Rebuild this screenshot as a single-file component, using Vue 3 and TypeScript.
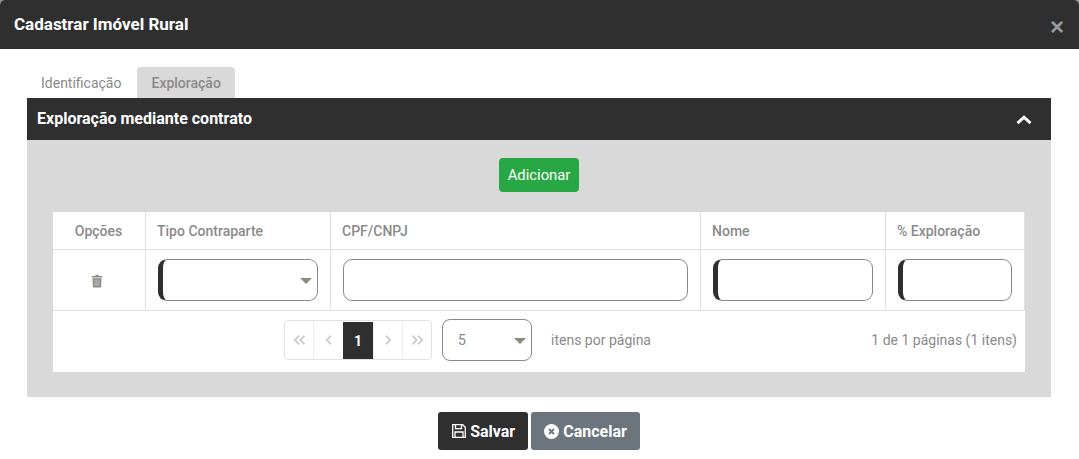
<script setup lang="ts">
const columns: string[] = ['Opções', 'Tipo Contraparte', 'CPF/CNPJ', 'Nome', '% Exploração']
</script>

<template>
  <div class="screen">
    <div class="modal">
      <header class="modal-head">
        <h1>Cadastrar Imóvel Rural</h1>
        <button class="close" aria-label="Fechar">×</button>
      </header>
      <div class="modal-body">
        <nav class="tabs">
          <span class="tab">Identificação</span>
          <span class="tab active">Exploração</span>
        </nav>
        <section class="panel">
          <div class="panel-head">
            <span>Exploração mediante contrato</span>
            <svg class="chev" width="16" height="10" viewBox="0 0 16 10">
              <path d="M1.500 8.200 8 2.200l6.500 6" fill="none" stroke="#fff" stroke-width="3" />
            </svg>
          </div>
          <div class="panel-body">
            <button class="add">Adicionar</button>
            <div class="grid">
              <div class="row head">
                <div v-for="c in columns" :key="c" class="cell" :class="{ center: c === 'Opções' }">{{ c }}</div>
              </div>
              <div class="row data">
                <div class="cell center">
                  <svg class="trash" width="12" height="14" viewBox="0 0 12 14">
                    <path fill="#8b8b8b" d="M.8 2h3.400l.5-1.200h2.600l.5 1.200h3.400v1.600H.8zM1.500 4.200h9l-.4 8.300c0 .6-.4 1-1 1H2.900c-.6 0-1-.4-1-1z" />
                    <path fill="#d2b89c" d="M3.600 5.500h1v6.500h-1z" />
                    <path fill="#c3c3c3" d="M5.500 5.500h1v6.500h-1z" />
                    <path fill="#a8bcd2" d="M7.400 5.500h1v6.500h-1z" />
                  </svg>
                </div>
                <div class="cell">
                  <div class="field req select"><i class="caret"></i></div>
                </div>
                <div class="cell"><div class="field"></div></div>
                <div class="cell"><div class="field req"></div></div>
                <div class="cell"><div class="field req"></div></div>
              </div>
              <div class="pager">
                <div class="pages">
                  <span class="pg">
                    <svg width="13" height="10" viewBox="0 0 13 10"><path d="M6 .8 1.800 5 6 9.200M11.500 .8 7.300 5l4.200 4.200" /></svg>
                  </span>
                  <span class="pg">
                    <svg width="8" height="10" viewBox="0 0 8 10"><path d="M6 .8 1.800 5 6 9.200" /></svg>
                  </span>
                  <span class="pg cur">1</span>
                  <span class="pg">
                    <svg width="8" height="10" viewBox="0 0 8 10"><path d="M2 .8 6.200 5 2 9.200" /></svg>
                  </span>
                  <span class="pg">
                    <svg width="13" height="10" viewBox="0 0 13 10"><path d="M1.500 .8 5.700 5 1.500 9.200M7 .8 11.200 5 7 9.200" /></svg>
                  </span>
                </div>
                <div class="size">5<i class="caret"></i></div>
                <span class="per">itens por página</span>
                <span class="info">1 de 1 páginas (1 itens)</span>
              </div>
            </div>
          </div>
        </section>
        <footer class="actions">
          <button class="btn dark">
            <svg width="16" height="16" viewBox="0 0 16 16" fill="none" stroke="#fff" stroke-width="1.300">
              <path d="M1.700 1.700h10l2.600 2.600v10H1.700z" />
              <path d="M4.500 1.700v4h6v-4M4 14.300V9h8v5.300" />
            </svg>
            Salvar
          </button>
          <button class="btn grey">
            <svg width="15" height="15" viewBox="0 0 15 15">
              <circle cx="7.500" cy="7.500" r="7.500" fill="#fff" />
              <path d="M5 5l5 5M10 5l-5 5" stroke="#6c757d" stroke-width="1.800" />
            </svg>
            Cancelar
          </button>
        </footer>
      </div>
    </div>
  </div>
</template>

<style scoped>
.screen {
  width: 1079px;
  height: 459px;
  overflow: hidden;
  background: #8c8c8c;
}
.modal {
  height: 459px;
  overflow: hidden;
  background: #fff;
  border-radius: 5px 5px 0 0;
  font-family: Roboto, "Liberation Sans", sans-serif;
  font-size: 14px;
  color: #8a8a8a;
}
.modal-head {
  height: 49px;
  box-sizing: border-box;
  background: #2f2f2f;
  display: flex;
  align-items: center;
  justify-content: space-between;
  padding: 0 14px;
}
.modal-head h1 {
  margin: 0 0 1px;
  font-size: 17px;
  font-weight: 700;
  color: #fff;
}
.close {
  background: none;
  border: 0;
  padding: 0;
  margin: 4px 1px 0 0;
  font: 700 24px/1 "Liberation Sans", sans-serif;
  color: #9a9a9a;
}
.modal-body {
  padding: 18px 28px 0 27px;
}
.tabs {
  display: flex;
  height: 31px;
}
.tab {
  padding: 0 14px;
  line-height: 32px;
  font-size: 14px;
  color: #8a8a8a;
}
.tab.active {
  background: #d9d9d9;
  border-radius: 4px 4px 0 0;
  font-weight: 500;
  margin-left: 2px;
}
.panel-head {
  height: 42px;
  box-sizing: border-box;
  background: #2f2f2f;
  display: flex;
  align-items: center;
  justify-content: space-between;
  padding: 0 19px 1px 10px;
  color: #fff;
  font-size: 16px;
  font-weight: 700;
}
.chev {
  margin-top: 2px;
}
.panel-body {
  height: 257px;
  background: #d9d9d9;
  box-sizing: border-box;
  padding-top: 18px;
  display: flex;
  flex-direction: column;
  align-items: center;
}
.add {
  width: 80px;
  height: 34px;
  background: #28a745;
  border: 0;
  border-radius: 4px;
  color: #fff;
  font: 400 14.800px Roboto, sans-serif;
  padding: 0;
}
.grid {
  width: 972px;
  margin-top: 20px;
  background: #fff;
}
.row {
  display: grid;
  grid-template-columns: 92px 185px 370px 185px 140px;
  border-bottom: 1px solid #dee2e6;
}
.head {
  height: 37px;
}
.data {
  height: 60px;
}
.cell {
  box-sizing: border-box;
  border-left: 1px solid #dee2e6;
  padding: 0 11px 0 10px;
  display: flex;
  align-items: center;
  font-weight: 500;
  font-size: 14px;
}
.head .cell:not(.center) {
  padding-left: 11px;
}
.cell:first-child {
  border-left: 0;
}
.cell:last-child {
  border-right: 1px solid #dee2e6;
}
.cell.center {
  justify-content: center;
}
.data .cell {
  padding: 0 12px;
}
.trash {
  margin: 2px 0 0 -5px;
}
.field {
  position: relative;
  box-sizing: border-box;
  width: 100%;
  height: 42px;
  border: 1px solid #8a8a8a;
  border-radius: 9px;
  background: #fff;
}
.field.req {
  border-left: 5px solid #2f2f2f;
}
.caret {
  position: absolute;
  right: 5px;
  top: 18px;
  width: 0;
  height: 0;
  border-left: 6px solid transparent;
  border-right: 6px solid transparent;
  border-top: 6px solid #8f8a80;
}
.pager {
  height: 61px;
  box-sizing: border-box;
  padding: 0 8px 3px 231px;
  display: flex;
  align-items: center;
  font-size: 14px;
}
.pages {
  display: grid;
  grid-template-columns: 28px 30px 30px 29px 29px;
  height: 40px;
  box-sizing: border-box;
  border: 1px solid #e2e2e2;
  border-radius: 4px;
  width: 148px;
}
.pg {
  display: flex;
  align-items: center;
  justify-content: center;
  border-left: 1px solid #eee;
}
.pg:first-child {
  border-left: 0;
}
.pg svg {
  fill: none;
  stroke: #cfcfcf;
  stroke-width: 2;
}
.pg.cur {
  background: #2f2f2f;
  color: #fff;
  font-size: 14px;
  font-weight: 700;
  border: 0;
  margin-top: 1px;
}
.size {
  position: relative;
  box-sizing: border-box;
  width: 90px;
  height: 42px;
  margin-left: 10px;
  border: 1px solid #8a8a8a;
  border-radius: 8px;
  padding-left: 15px;
  line-height: 40px;
}
.per {
  margin-left: 19px;
}
.info {
  margin-left: auto;
}
.actions {
  display: flex;
  justify-content: center;
  gap: 3px;
  margin-top: 15px;
}
.btn {
  height: 38px;
  border: 0;
  border-radius: 3px;
  color: #fff;
  font: 700 16px Roboto, sans-serif;
  display: flex;
  align-items: center;
  gap: 3px;
  padding: 0 13px;
}
.dark {
  background: #2f2f2f;
}
.grey {
  background: #6c757d;
  gap: 4px;
}
</style>
